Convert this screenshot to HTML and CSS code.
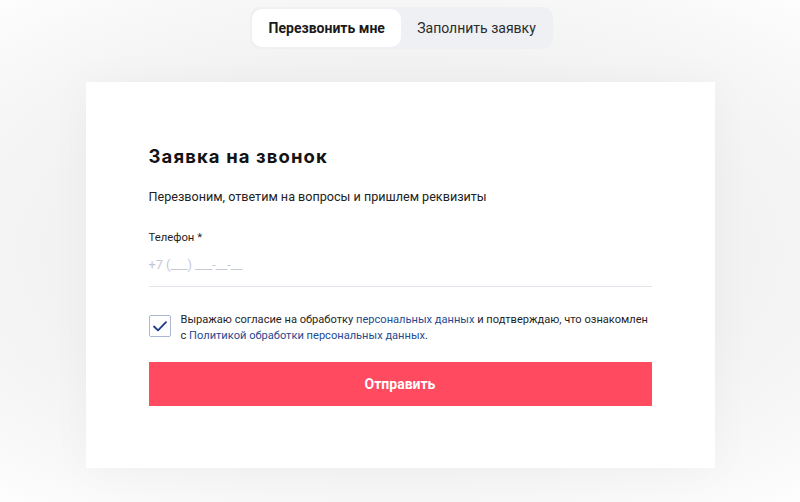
FILE: index.html
```html
<!DOCTYPE html>
<html lang="ru">
<head>
<meta charset="utf-8">
<link rel="stylesheet" href="styles.css">
</head>
<body>
<div class="page">
  <div class="tabs">
    <div class="tab active">Перезвонить мне</div>
    <div class="tab">Заполнить заявку</div>
  </div>
  <div class="card">
    <h1 class="title">Заявка на звонок</h1>
    <p class="lead">Перезвоним, ответим на вопросы и пришлем реквизиты</p>
    <div class="field">
      <div class="label">Телефон *</div>
      <div class="input">+7 (___) ___-__-__</div>
    </div>
    <div class="consent">
      <div class="check">
        <svg width="14" height="11" viewBox="0 0 14 11"><path d="M1 5.5 L5 9.3 L13 1.2" fill="none" stroke="#1d3a86" stroke-width="1.8" stroke-linecap="round" stroke-linejoin="round"/></svg>
      </div>
      <p class="consent-text">Выражаю согласие на обработку <a href="#">персональных данных</a> и подтверждаю, что ознакомлен с <a href="#">Политикой обработки персональных данных</a>.</p>
    </div>
    <button class="submit">Отправить</button>
  </div>
</div>
</body>
</html>
```
FILE: styles.css
```css
* { box-sizing: border-box; }
html, body { margin: 0; padding: 0; }
body {
  background: #ffffff;
  font-family: Roboto, "Liberation Sans", sans-serif;
  color: #1f1f1f;
  width: 800px;
  height: 502px;
  overflow: hidden;
}
.page {
  display: flex;
  flex-direction: column;
  align-items: center;
  padding-top: 7px;
  height: 502px;
  background: radial-gradient(ellipse 640px 340px at 400px 250px, #f2f2f2 55%, #f9f9f9 85%, #ffffff 100%);
}
.tabs {
  display: flex;
  background: #eef0f4;
  border-radius: 10px;
  padding: 2px;
  margin-left: 3px;
  height: 42px;
}
.tab {
  display: flex;
  align-items: center;
  padding: 0 15px;
  font-size: 14px;
  color: #2b2b2b;
  border-radius: 10px;
}
.tab.active {
  background: #ffffff;
  font-weight: 700;
  color: #1a1a1a;
  width: 149px;
  justify-content: center;
  margin-right: 1px;
}
.card {
  margin-top: 33px;
  width: 629px;
  height: 386px;
  background: #ffffff;
  padding: 61px 63px 0 63px;
  box-shadow: 0 0 40px rgba(0,0,0,0.035);
}
.title {
  margin: 0;
  font-family: Inter, "Noto Sans", sans-serif;
  font-weight: 700;
  font-size: 18.5px;
  line-height: 26px;
  color: #141414;
  letter-spacing: 1.1px;
}
.lead {
  margin: 18px 0 0 0;
  font-size: 12.6px;
  line-height: 20px;
  color: #222;
}
.field { margin-top: 23px; }
.label {
  font-size: 11.3px;
  line-height: 16px;
  color: #1f1f1f;
}
.input {
  margin-top: 9px;
  font-size: 12.7px;
  line-height: 20px;
  color: #c3c8d4;
  padding-bottom: 11px;
  border-bottom: 1px solid #e1e4ea;
}
.consent {
  display: flex;
  align-items: flex-start;
  margin-top: 25px;
}
.check {
  flex: none;
  width: 22px;
  height: 22px;
  border: 1.5px solid #aab7d3;
  border-radius: 2px;
  display: flex;
  align-items: center;
  justify-content: center;
  margin-top: 3px;
  margin-right: 10px;
}
.consent-text {
  margin: 0;
  font-size: 11.1px;
  line-height: 16px;
  color: #1f1f1f;
}
.consent-text a {
  color: #264a93;
  text-decoration: none;
}
.submit {
  display: block;
  margin-top: 18px;
  width: 503px;
  height: 44px;
  border: none;
  background: #ff4a5f;
  color: #ffffff;
  font-family: Roboto, "Liberation Sans", sans-serif;
  font-weight: 700;
  font-size: 14px;
  padding: 0;
}
```
